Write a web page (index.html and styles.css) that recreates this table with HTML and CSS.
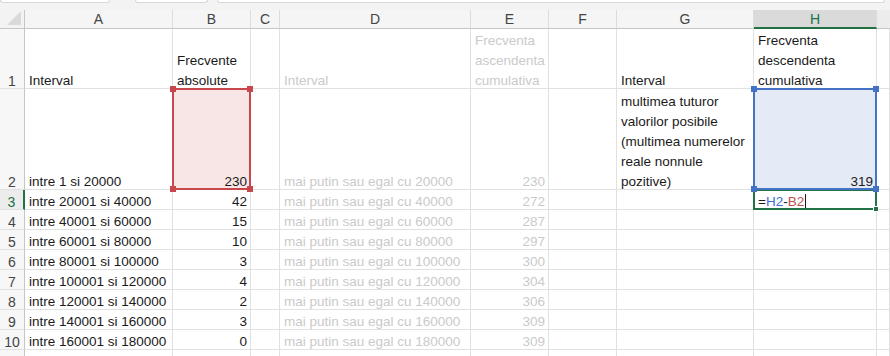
FILE: index.html
```html
<!DOCTYPE html>
<html lang="ro">
<head>
  <meta charset="UTF-8">
  <meta name="viewport" content="width=device-width, initial-scale=1.0">
  <title>Frecvente</title>
  <link rel="stylesheet" href="styles.css">
</head>
<body>
  <div class="topbar">
    <span class="box b1"></span>
    <span class="box b2"></span>
    <span class="box b3"></span>
  </div>
  <div class="sheet">
    <!-- antet coloane -->
    <div class="corner"><span class="tri"></span></div>
    <div class="colhead">A</div>
    <div class="colhead">B</div>
    <div class="colhead">C</div>
    <div class="colhead">D</div>
    <div class="colhead">E</div>
    <div class="colhead">F</div>
    <div class="colhead">G</div>
    <div class="colhead sel">H</div>
    <div class="colhead last"></div>

    <!-- 1 -->
    <div class="rowhead"><span>1</span></div>
    <div class="cell"><span>Interval</span></div>
    <div class="cell"><span>Frecvente<br>absolute</span></div>
    <div class="cell"></div>
    <div class="cell dim"><span>Interval</span></div>
    <div class="cell dim"><span>Frecventa<br>ascendenta<br>cumulativa</span></div>
    <div class="cell"></div>
    <div class="cell"><span>Interval</span></div>
    <div class="cell"><span>Frecventa<br>descendenta<br>cumulativa</span></div>
    <div class="cell"></div>

    <!-- 2 -->
    <div class="rowhead"><span>2</span></div>
    <div class="cell"><span>intre 1 si 20000</span></div>
    <div class="cell num ref-red"><span>230</span>
      <i class="frame red"><b class="h tl"></b><b class="h tr"></b><b class="h bl"></b><b class="h br"></b></i>
    </div>
    <div class="cell"></div>
    <div class="cell dim"><span>mai putin sau egal cu 20000</span></div>
    <div class="cell num dim"><span>230</span></div>
    <div class="cell"></div>
    <div class="cell"><span>multimea tuturor<br>valorilor posibile<br>(multimea numerelor<br>reale nonnule<br>pozitive)</span></div>
    <div class="cell num ref-blue"><span>319</span>
      <i class="frame blue"><b class="h tl"></b><b class="h tr"></b><b class="h bl"></b><b class="h br"></b></i>
    </div>
    <div class="cell"></div>

    <!-- 3 -->
    <div class="rowhead sel"><span>3</span></div>
    <div class="cell"><span>intre 20001 si 40000</span></div>
    <div class="cell num"><span>42</span></div>
    <div class="cell"></div>
    <div class="cell dim"><span>mai putin sau egal cu 40000</span></div>
    <div class="cell num dim"><span>272</span></div>
    <div class="cell"></div>
    <div class="cell"></div>
    <div class="cell active"><span class="formula">=<em class="fb">H2</em>-<em class="fr">B2</em><b class="caret"></b></span>
      <i class="frame green"><b class="fill"></b></i>
    </div>
    <div class="cell"></div>

    <!-- 4 -->
    <div class="rowhead"><span>4</span></div>
    <div class="cell"><span>intre 40001 si 60000</span></div>
    <div class="cell num"><span>15</span></div>
    <div class="cell"></div>
    <div class="cell dim"><span>mai putin sau egal cu 60000</span></div>
    <div class="cell num dim"><span>287</span></div>
    <div class="cell"></div>
    <div class="cell"></div>
    <div class="cell"></div>
    <div class="cell"></div>

    <!-- 5 -->
    <div class="rowhead"><span>5</span></div>
    <div class="cell"><span>intre 60001 si 80000</span></div>
    <div class="cell num"><span>10</span></div>
    <div class="cell"></div>
    <div class="cell dim"><span>mai putin sau egal cu 80000</span></div>
    <div class="cell num dim"><span>297</span></div>
    <div class="cell"></div>
    <div class="cell"></div>
    <div class="cell"></div>
    <div class="cell"></div>

    <!-- 6 -->
    <div class="rowhead"><span>6</span></div>
    <div class="cell"><span>intre 80001 si 100000</span></div>
    <div class="cell num"><span>3</span></div>
    <div class="cell"></div>
    <div class="cell dim"><span>mai putin sau egal cu 100000</span></div>
    <div class="cell num dim"><span>300</span></div>
    <div class="cell"></div>
    <div class="cell"></div>
    <div class="cell"></div>
    <div class="cell"></div>

    <!-- 7 -->
    <div class="rowhead"><span>7</span></div>
    <div class="cell"><span>intre 100001 si 120000</span></div>
    <div class="cell num"><span>4</span></div>
    <div class="cell"></div>
    <div class="cell dim"><span>mai putin sau egal cu 120000</span></div>
    <div class="cell num dim"><span>304</span></div>
    <div class="cell"></div>
    <div class="cell"></div>
    <div class="cell"></div>
    <div class="cell"></div>

    <!-- 8 -->
    <div class="rowhead"><span>8</span></div>
    <div class="cell"><span>intre 120001 si 140000</span></div>
    <div class="cell num"><span>2</span></div>
    <div class="cell"></div>
    <div class="cell dim"><span>mai putin sau egal cu 140000</span></div>
    <div class="cell num dim"><span>306</span></div>
    <div class="cell"></div>
    <div class="cell"></div>
    <div class="cell"></div>
    <div class="cell"></div>

    <!-- 9 -->
    <div class="rowhead"><span>9</span></div>
    <div class="cell"><span>intre 140001 si 160000</span></div>
    <div class="cell num"><span>3</span></div>
    <div class="cell"></div>
    <div class="cell dim"><span>mai putin sau egal cu 160000</span></div>
    <div class="cell num dim"><span>309</span></div>
    <div class="cell"></div>
    <div class="cell"></div>
    <div class="cell"></div>
    <div class="cell"></div>

    <!-- 10 -->
    <div class="rowhead"><span>10</span></div>
    <div class="cell"><span>intre 160001 si 180000</span></div>
    <div class="cell num"><span>0</span></div>
    <div class="cell"></div>
    <div class="cell dim"><span>mai putin sau egal cu 180000</span></div>
    <div class="cell num dim"><span>309</span></div>
    <div class="cell"></div>
    <div class="cell"></div>
    <div class="cell"></div>
    <div class="cell"></div>

    <!-- 11 -->
    <div class="rowhead"></div>
    <div class="cell"></div>
    <div class="cell"></div>
    <div class="cell"></div>
    <div class="cell"></div>
    <div class="cell"></div>
    <div class="cell"></div>
    <div class="cell"></div>
    <div class="cell"></div>
    <div class="cell"></div>
  </div>
</body>
</html>
```

FILE: styles.css
```css
* {
  box-sizing: border-box;
}
body {
  margin: 0;
  background-color: #ffffff;
  font-family: "Liberation Sans", Arial, sans-serif;
  font-size: 13.5px;
  color: #1a1a1a;
  overflow: hidden;
}
.topbar {
  height: 10px;
  background-color: #f3f3f3;
  display: flex;
  align-items: flex-start;
}
.box {
  height: 3px;
  background-color: #ffffff;
  border: 1px solid #d8d8d8;
  border-top: none;
  border-radius: 0 0 3px 3px;
}
.b1 {
  width: 110px;
}
.b2 {
  width: 73px;
  margin-left: 25px;
}
.b3 {
  width: 668px;
  margin-left: 9px;
}
.sheet {
  display: grid;
  grid-template-columns: 25px 148px 78px 29px 191px 78px 68px 137px 123px 13px;
  grid-template-rows: 19px 60px 101px repeat(9, 20px);
}
.corner {
  background-color: #f3f3f3;
  border-right: 1px solid #c6c6c6;
  border-bottom: 1px solid #c6c6c6;
  position: relative;
}
.tri {
  position: absolute;
  right: 3px;
  bottom: 3px;
  width: 0;
  height: 0;
  border-left: 14px solid transparent;
  border-bottom: 14px solid #dadada;
}
.colhead {
  background-color: #f5f5f5;
  border-right: 1px solid #dddddd;
  border-bottom: 1px solid #c6c6c6;
  text-align: center;
  line-height: 19px;
  font-size: 14px;
  color: #444444;
}
.colhead.sel {
  background-color: #dadada;
  color: #217346;
  border-bottom: 2px solid #217346;
}
.colhead.last {
  border-right: none;
  background-color: #ececec;
}
.rowhead {
  background-color: #f7f7f7;
  border-right: 1px solid #c6c6c6;
  border-bottom: 1px solid #e1e1e1;
  display: flex;
  align-items: flex-end;
  justify-content: center;
  line-height: 19px;
  font-size: 14px;
  color: #444444;
}
.rowhead.sel {
  color: #217346;
  border-right: 2px solid #217346;
  background-color: #ececec;
}
.cell {
  position: relative;
  display: flex;
  align-items: flex-end;
  padding: 0 3px 0 4px;
  border-right: 1px solid #e1e1e1;
  border-bottom: 1px solid #e1e1e1;
  line-height: 20px;
  white-space: nowrap;
}
/* textul sta mai jos in celula, ca in Excel */
.cell > span,
.rowhead > span {
  position: relative;
  top: 3px;
}
.num {
  justify-content: flex-end;
}
.dim {
  color: #cacaca;
}
.ref-red {
  background-color: #f8e6e7;
}
.ref-blue {
  background-color: #e5ebf6;
}

/* chenare pentru referintele din formula */
.frame {
  position: absolute;
  top: -1px;
  left: -1px;
  right: -1px;
  bottom: -1px;
  border: 2px solid;
  pointer-events: none;
}
.frame.red {
  border-color: #c8474d;
  z-index: 2;
}
.frame.blue {
  border-color: #4472c4;
  z-index: 2;
}
.frame.green {
  border-color: #217346;
  z-index: 1;
}
.h {
  position: absolute;
  width: 6px;
  height: 6px;
}
.red .h {
  background-color: #c8474d;
}
.blue .h {
  background-color: #4472c4;
}
.tl {
  top: -4px;
  left: -4px;
}
.tr {
  top: -4px;
  right: -4px;
}
.bl {
  bottom: -4px;
  left: -4px;
}
.br {
  bottom: -4px;
  right: -4px;
}
.fill {
  position: absolute;
  right: -4px;
  bottom: -4px;
  width: 6px;
  height: 6px;
  background-color: #217346;
  border: 1px solid #ffffff;
}
.formula em {
  font-style: normal;
}
.fb {
  color: #3f6fd0;
}
.fr {
  color: #c0504d;
}
.caret {
  display: inline-block;
  width: 1px;
  height: 16px;
  margin-left: 1px;
  vertical-align: -4px;
  background-color: #1a1a1a;
}
```
